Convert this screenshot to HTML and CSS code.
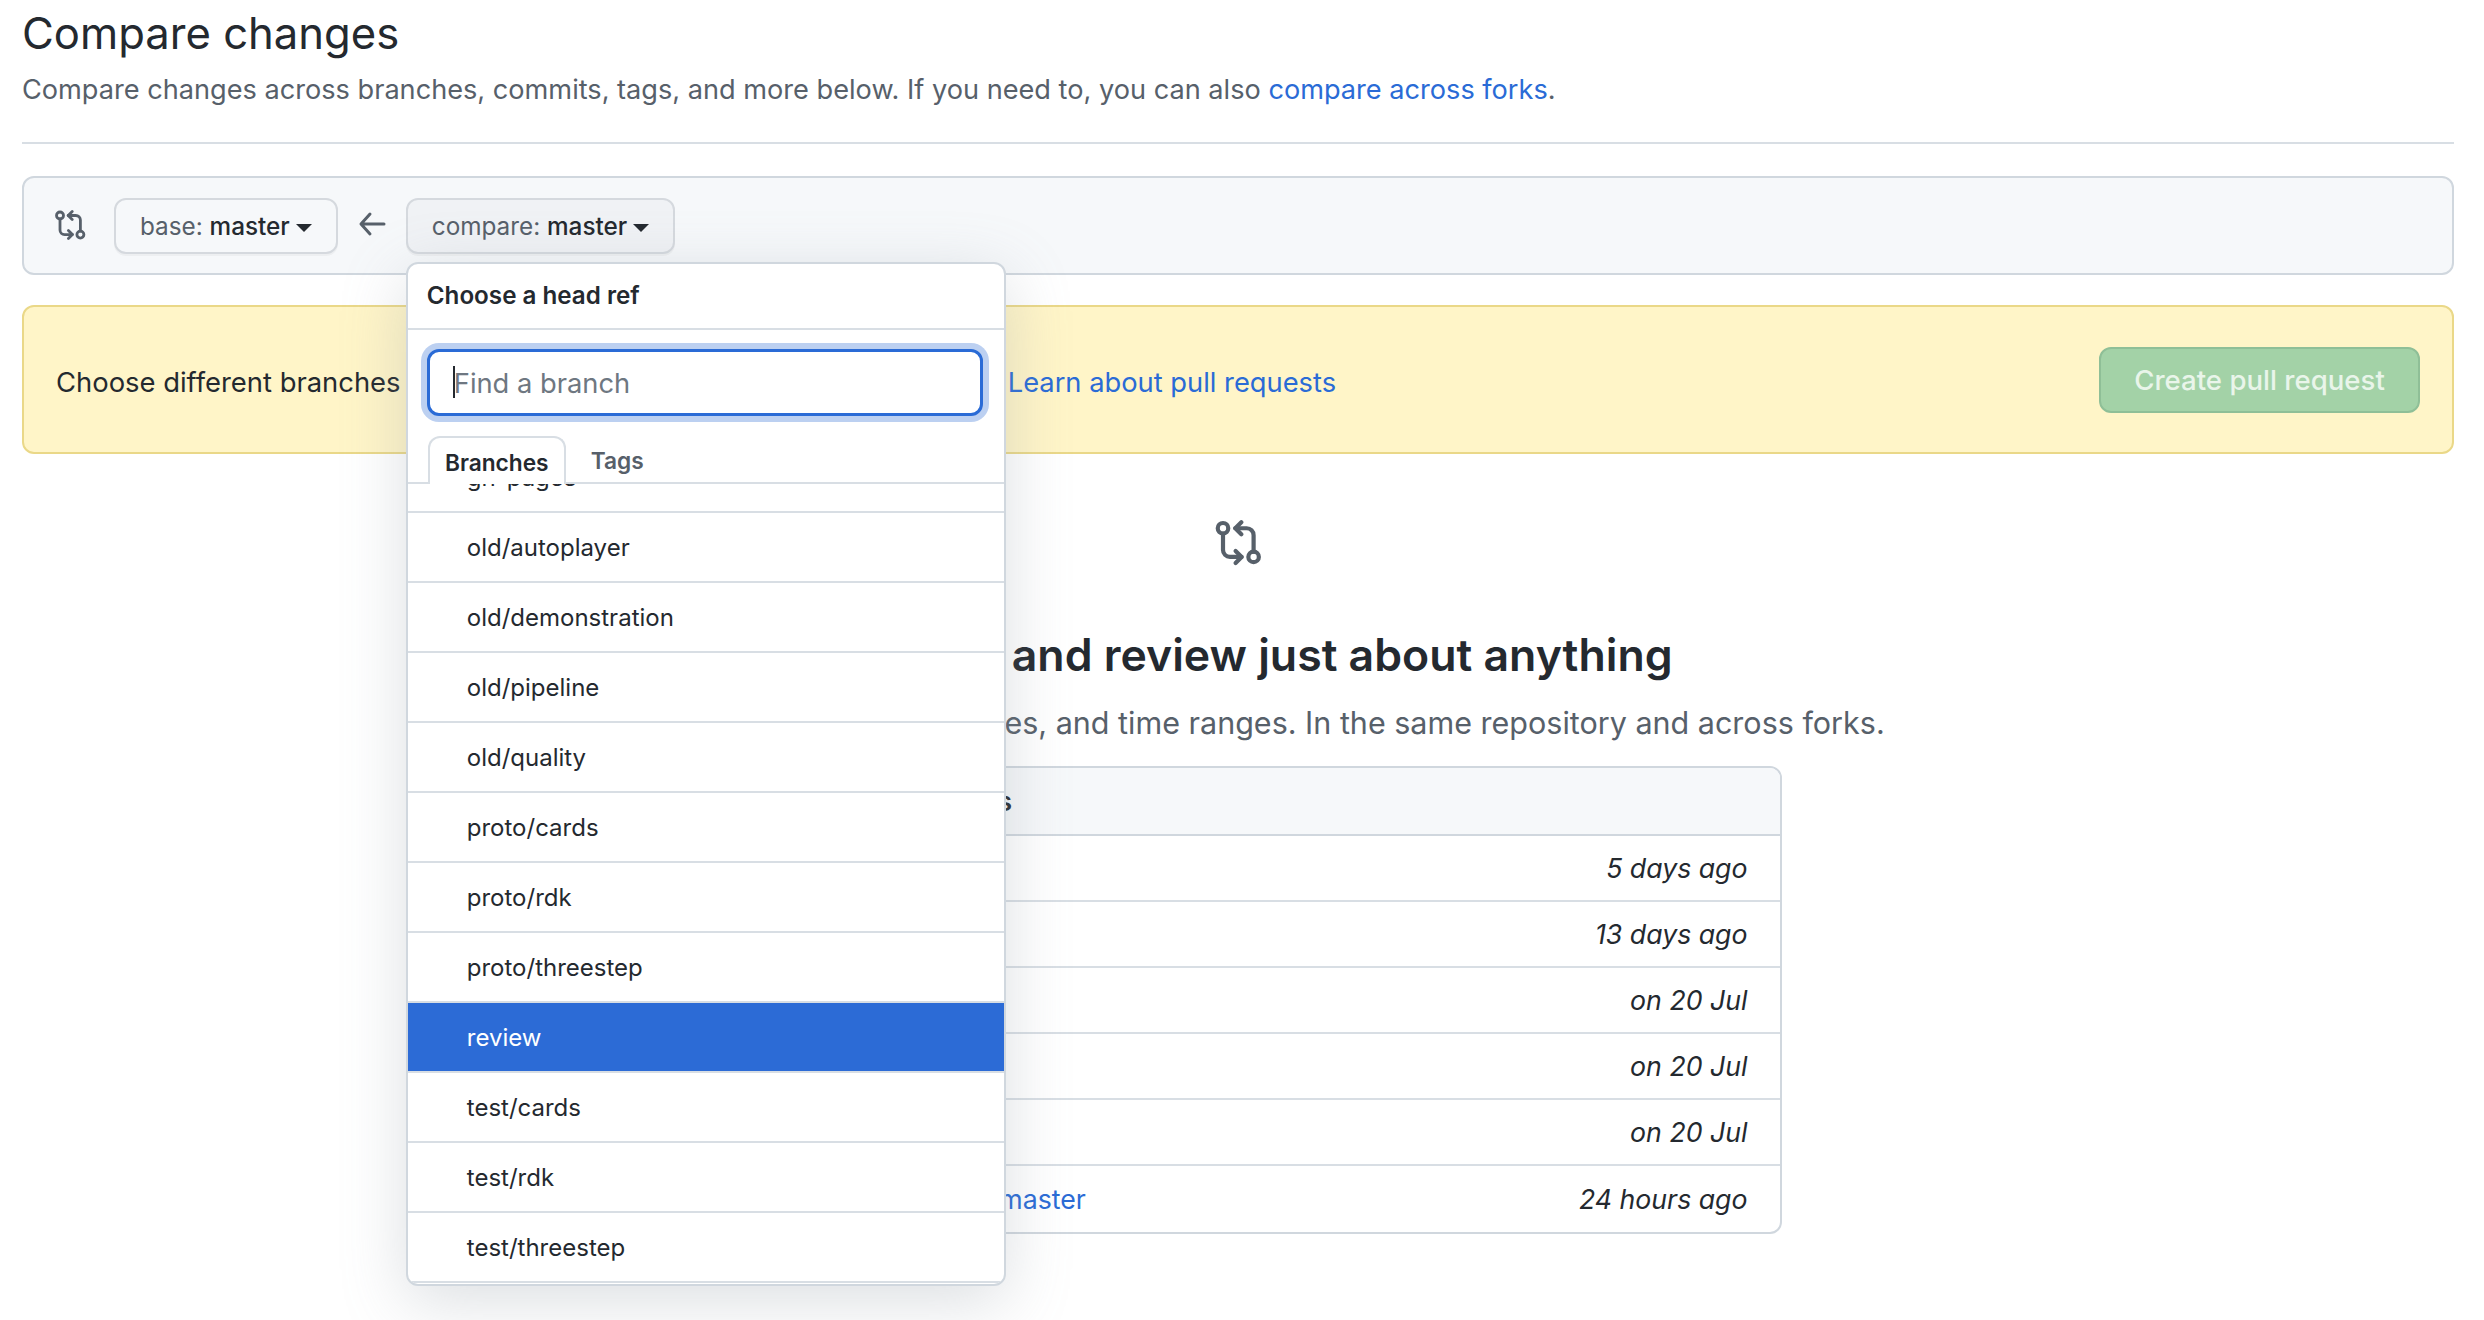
FILE: index.html
```html
<!DOCTYPE html>
<html>
<head>
    <meta charset="utf-8">
    <title>Compare changes</title>
    <link rel="stylesheet" href="styles.css">
</head>
<body>
    <svg class="defs" width="0" height="0">
        <symbol id="compare" viewBox="0 0 16 16">
            <g fill="none" stroke="currentColor" stroke-width="1.4" stroke-linecap="round" stroke-linejoin="round">
                <circle cx="3" cy="2.75" r="1.75"/>
                <circle cx="13.2" cy="12.3" r="1.75"/>
                <path d="M3 4.5V10A2.3 2.3 0 0 0 5.3 12.3H9.2"/>
                <path d="M7.2 10.3L9.2 12.3L7.2 14.3"/>
                <path d="M13.2 10.55V5.05A2.3 2.3 0 0 0 10.9 2.75H7.1"/>
                <path d="M9.1 .75L7.1 2.75L9.1 4.75"/>
            </g>
        </symbol>
    </svg>

    <div class="page">
        <h1 class="title">Compare changes</h1>
        <p class="lead">Compare changes across branches, commits, tags, and more below. If you need to, you can also <a href="#">compare across forks</a>.</p>
        <hr class="rule">

        <div class="range">
            <svg class="range-icon"><use href="#compare"/></svg>
            <button class="btn">base: <b>master</b><span class="caret"></span></button>
            <svg class="range-arrow" viewBox="0 0 16 16"><path d="M7 3L2.5 8L7 13M3 8H14" fill="none" stroke="currentColor" stroke-width="1.5" stroke-linecap="round" stroke-linejoin="round"/></svg>
            <div class="menu-wrap">
                <button class="btn btn-open">compare: <b>master</b><span class="caret"></span></button>
                <div class="menu">
                    <div class="menu-head">Choose a head ref</div>
                    <div class="menu-filter">
                        <input class="filter-input" type="text" placeholder="Find a branch">
                        <span class="text-cursor"></span>
                    </div>
                    <div class="tabs">
                        <span class="tab tab-on">Branches</span>
                        <span class="tab">Tags</span>
                    </div>
                    <div class="refs">
                        <div class="ref ref-clipped">gh-pages</div>
                        <div class="ref">old/autoplayer</div>
                        <div class="ref">old/demonstration</div>
                        <div class="ref">old/pipeline</div>
                        <div class="ref">old/quality</div>
                        <div class="ref">proto/cards</div>
                        <div class="ref">proto/rdk</div>
                        <div class="ref">proto/threestep</div>
                        <div class="ref ref-on">review</div>
                        <div class="ref">test/cards</div>
                        <div class="ref">test/rdk</div>
                        <div class="ref">test/threestep</div>
                    </div>
                </div>
            </div>
        </div>

        <div class="flash">
            <span class="flash-text">Choose different branches <span class="flash-rest">or forks above to discuss and review changes. </span><a href="#">Learn about pull requests</a></span>
            <button class="btn-create">Create pull request</button>
        </div>

        <div class="blank">
            <svg class="blank-icon"><use href="#compare"/></svg>
            <h2 class="blank-title">Compare and review just about anything</h2>
            <p class="blank-sub">Branches, tags, commit ranges, and time ranges. In the same repository and across forks.</p>
            <div class="examples">
                <div class="examples-head">Example comparisons</div>
                <div class="example"><a href="#">review</a><i>5 days ago</i></div>
                <div class="example"><a href="#">test/cards</a><i>13 days ago</i></div>
                <div class="example"><a href="#">test/rdk</a><i>on 20 Jul</i></div>
                <div class="example"><a href="#">test/threestep</a><i>on 20 Jul</i></div>
                <div class="example"><a href="#">proto/cards</a><i>on 20 Jul</i></div>
                <div class="example"><a href="#">proto/threestep-old...master</a><i>24 hours ago</i></div>
            </div>
        </div>
    </div>
</body>
</html>
```

FILE: styles.css
```css
*{
    box-sizing: border-box;
    margin: 0;
}
body{
    font-family: Inter, "Noto Sans", sans-serif;
    color: #24292f;
    background-color: white;
    overflow: hidden;
}
a{
    color: #2a6bd6;
    text-decoration: none;
}
.defs{
    position: absolute;
}
.page{
    padding: 0 30px 0 22px;
    height: 1320px;
}
.title{
    font-size: 43.6px;
    font-weight: 400;
    line-height: 58px;
    padding-top: 5px;
}
.lead{
    font-size: 27.15px;
    line-height: 40px;
    color: #57606a;
    margin-top: 7px;
}
.rule{
    border: none;
    border-top: 2px solid #d8dee4;
    margin-top: 32px;
}
.range{
    display: flex;
    align-items: center;
    height: 99px;
    margin-top: 32px;
    padding-left: 30px;
    background-color: #f6f8fa;
    border: 2px solid #d0d7de;
    border-radius: 12px;
}
.range-icon{
    width: 32px;
    height: 32px;
    color: #57606a;
    margin-right: 28px;
}
.btn{
    display: block;
    height: 56px;
    padding: 0 24px;
    font-family: inherit;
    font-size: 24.3px;
    color: #57606a;
    background-color: #f6f8fa;
    border: 2px solid #d5d9de;
    border-radius: 12px;
    box-shadow: 0 2px 0 rgba(27,31,36,0.04);
}
.btn b{
    font-weight: 500;
    color: #24292f;
}
.btn-open{
    background-color: #f0f2f5;
}
.caret{
    display: inline-block;
    margin-left: 6px;
    vertical-align: 3px;
    border-top: 8px solid #24292f;
    border-left: 8px solid transparent;
    border-right: 8px solid transparent;
}
.range-arrow{
    width: 32px;
    height: 32px;
    color: #57606a;
    margin: -3px 18px 0 18px;
}
.menu-wrap{
    position: relative;
}
.menu{
    position: absolute;
    z-index: 10;
    top: 64px;
    left: 0;
    width: 600px;
    height: 1024px;
    overflow: hidden;
    background-color: white;
    border: 2px solid #d0d7de;
    border-radius: 12px;
    box-shadow: 0 16px 64px rgba(140,149,159,0.3);
}
.menu-head{
    height: 66px;
    padding-left: 19px;
    line-height: 64px;
    font-size: 24.2px;
    font-weight: 600;
    border-bottom: 2px solid #d8dee4;
}
.menu-filter{
    position: relative;
    padding: 19px 19px 0;
}
.filter-input{
    display: block;
    width: 556px;
    height: 67px;
    padding: 2px 24px 0;
    font-family: inherit;
    font-size: 27.3px;
    background-color: white;
    border: 3px solid #2a6bd6;
    border-radius: 12px;
    box-shadow: 0 0 0 6px #bcd0f1;
    outline: none;
}
.filter-input::placeholder{
    color: #6e7781;
}
.text-cursor{
    position: absolute;
    top: 36px;
    left: 45px;
    width: 2px;
    height: 32px;
    background-color: #24292f;
}
.tabs{
    display: flex;
    height: 48px;
    margin-top: 20px;
    padding-left: 20px;
    border-bottom: 2px solid #d8dee4;
    position: relative;
    z-index: 1;
}
.tab{
    width: 138px;
    height: 48px;
    line-height: 50px;
    text-align: center;
    font-size: 22.7px;
    font-weight: 600;
    color: #57606a;
}
.tab + .tab{
    width: auto;
    padding: 0 25px;
}
.tab-on{
    color: #24292f;
    background-color: white;
    border: 2px solid #d8dee4;
    border-bottom: none;
    border-radius: 12px 12px 0 0;
}
.refs{
    height: 800px;
    overflow: hidden;
}
.ref{
    height: 70px;
    padding-left: 59px;
    line-height: 69px;
    font-size: 24px;
    border-bottom: 2px solid #d8dee4;
}
.ref-clipped{
    margin-top: -41px;
}
.ref-on{
    color: white;
    background-color: #2c6bd6;
}
.flash{
    display: flex;
    align-items: center;
    justify-content: space-between;
    height: 149px;
    margin-top: 30px;
    padding: 0 32px;
    font-size: 27.4px;
    background-color: #fff5c8;
    border: 2px solid #ead888;
    border-radius: 12px;
}
.flash-text{
    padding-top: 5px;
}
.flash-text a{
    font-size: 27.3px;
}
.flash-rest{
    word-spacing: -1.2px;
}
.btn-create{
    width: 321px;
    height: 66px;
    font-family: inherit;
    font-size: 27.6px;
    font-weight: 500;
    color: #e9f5ea;
    background-color: #a3d2a7;
    border: 2px solid #8fbf97;
    border-radius: 12px;
}
.blank{
    display: flex;
    flex-direction: column;
    align-items: center;
    padding-top: 66px;
}
.blank-icon{
    width: 48px;
    height: 48px;
    color: #57606a;
}
.blank-title{
    font-size: 44.6px;
    font-weight: 600;
    line-height: 60px;
    margin-top: 57px;
}
.blank-sub{
    font-size: 30.5px;
    line-height: 44px;
    color: #57606a;
    margin-top: 16px;
}
.examples{
    width: 1087px;
    margin-top: 21px;
    border: 2px solid #d0d7de;
    border-radius: 12px;
    overflow: hidden;
}
.examples-head{
    height: 68px;
    padding-left: 33px;
    line-height: 66px;
    font-size: 26.5px;
    font-weight: 600;
    background-color: #f6f8fa;
    border-bottom: 2px solid #d0d7de;
}
.example{
    display: flex;
    justify-content: space-between;
    align-items: center;
    height: 66px;
    padding: 0 32px 0 33px;
    font-size: 26.7px;
    border-bottom: 2px solid #d8dee4;
}
.example:last-child{
    border-bottom: none;
}
```
